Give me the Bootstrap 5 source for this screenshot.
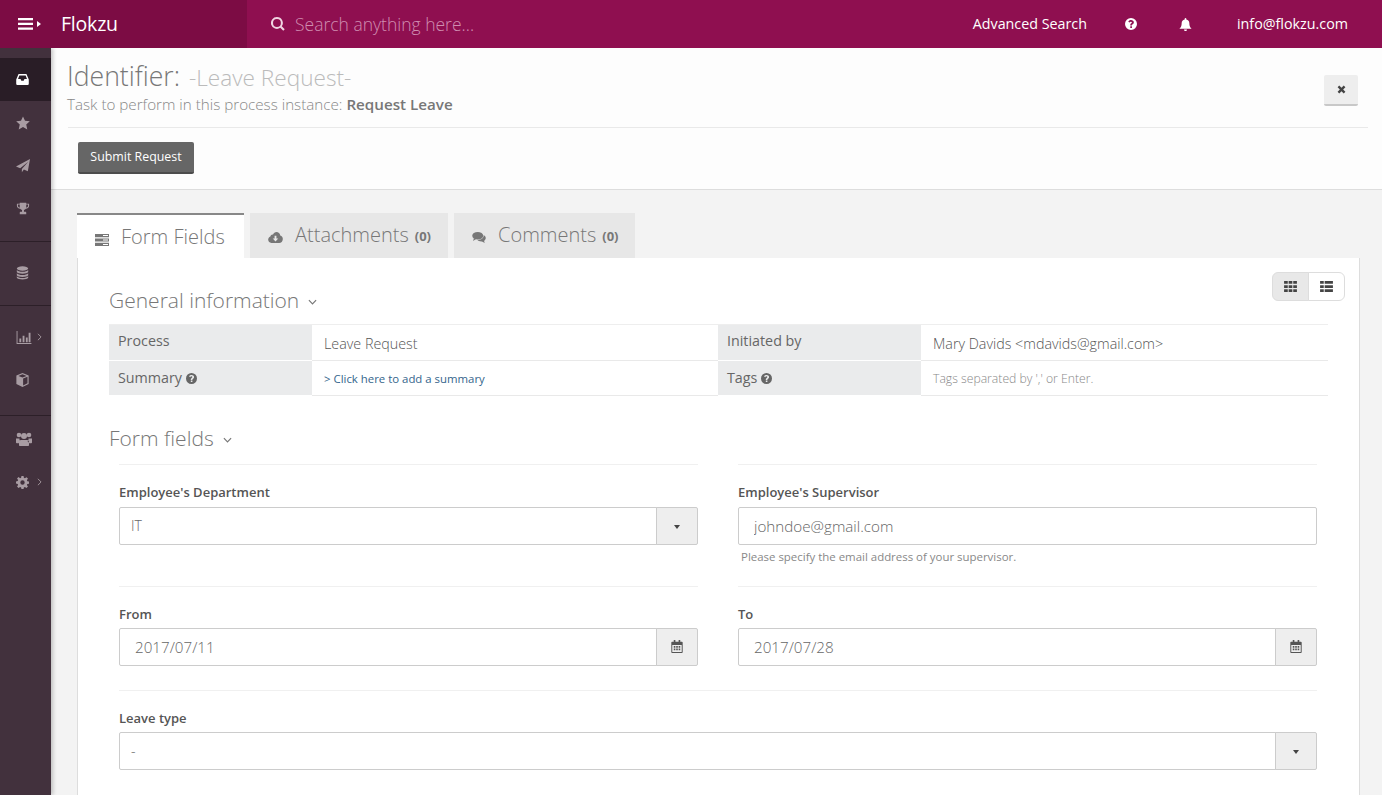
<!DOCTYPE html>
<html lang="en">
<head>
    <meta charset="UTF-8">
    <meta name="viewport" content="width=device-width, initial-scale=1.0">
    <title>Flokzu</title>
    <link href="https://cdn.jsdelivr.net/npm/bootstrap@5.3.0/dist/css/bootstrap.min.css" rel="stylesheet">
    <style>
        body { font-family: "Open Sans", "Liberation Sans", sans-serif; color: #666; background: #f3f3f3; font-size: 13px; }
        svg.ico { fill: currentColor; display: inline-block; flex: none; }

        .topbar { height: 48px; background: #8f0f50; color: #fff; }
        .brand-area { width: 247px; background: #7c0c44; padding-left: 18px; }
        .brand-name { font-size: 19.5px; font-weight: 500; margin-left: 20px; letter-spacing: -.2px; }
        .search-area { padding-left: 24px; color: #f0d5e2; }
        .search-text { font-size: 17.5px; font-weight: 300; color: #cf8db0; margin-left: 10px; }
        .top-link { font-size: 14.3px; font-weight: 400; color: #fff; text-decoration: none; }
        .top-links { padding-right: 34px; }
        .top-help { margin: 0 42px 0 38px; }
        .top-mail { margin-left: 45px; }

        .side-menu { width: 51px; background: #42313d; color: #a89ca3; box-shadow: 2px 0 4px rgba(0,0,0,.22); z-index: 2; }
        .side-group { border-bottom: 1px solid #2c1f28; padding: 10px 0; }
        .side-group.is-first { padding-bottom: 10.5px; }
        .side-group.is-third { padding-bottom: 13px; }
        .side-group.is-last { border: 0; padding: 2px 0; }
        .side-item { height: 43px; padding-left: 16px; }
        .side-item.is-active { background: #291d26; color: #fff; }
        .side-caret { margin-left: 5px; color: #a89ca3; }
        .side-caret.is-wide { margin-left: 8px; }

        .main-col { min-width: 0; }
        .page-head { background: #fdfdfd; border-bottom: 1px solid #ddd; height: 142px; padding: 12px 14px 0 16px; }
        .head-title { font-size: 26.6px; font-weight: 300; color: #777; line-height: 32px; margin: 0; }
        .head-title span { font-size: 22.6px; color: #bbb; margin-left: 2px; }
        .head-sub { font-size: 15.2px; font-weight: 300; color: #888; line-height: 20px; }
        .head-sub b { font-weight: 600; color: #777; }
        .head-rule { border-top: 1px solid #e9e9e9; margin: 13px 0 0 1px; padding: 14px 0 0 10px; }
        .btn-submit { background: #666; color: #fff; font-size: 12.4px; font-weight: 500; height: 32px; width: 116px; padding: 0; border: 0; border-bottom: 2px solid #4c4c4c; border-radius: 2px; }
        .btn-close-x { width: 34px; height: 31px; padding: 0; background: #eee; border: 0; border-bottom: 2px solid #c8c8c8; border-radius: 2px; color: #444; margin: 15px 10px 0 0; }

        .work-area { padding: 23px 22px 0 26px; }
        .flow-tabs { border: 0; gap: 6px; align-items: flex-start; }
        .flow-tabs .nav-link { height: 45px; margin: 0; border: 0; border-radius: 0; background: #e7e7e7; color: #777; font-size: 20px; font-weight: 300; display: flex; align-items: center; padding: 0 18px 2px; }
        .flow-tabs .nav-link small { font-size: 13px; font-weight: 700; margin-left: 6px; margin-top: 5px; }
        .flow-tabs .nav-link svg { margin-right: 12px; color: #777; fill: currentColor; margin-top: 6px; }
        .flow-tabs .nav-link.active { background: #fff; border-top: 2px solid #888; color: #777; padding-top: 3px; }
        .flow-tabs .nav-item:nth-child(1) .nav-link { width: 167px; }
        .flow-tabs .nav-item:nth-child(2) .nav-link { width: 198px; }
        .flow-tabs .nav-item:nth-child(3) .nav-link { width: 181px; }

        .form-sheet { background: #fff; border: 1px solid #ddd; border-top: 0; border-radius: 0 0 3px 3px; padding: 14px 31px 40px; height: 600px; }
        .sheet-top { height: 38px; }
        .view-switch { margin-right: -17px; }
        .view-switch .btn { width: 37px; height: 29px; padding: 0; border-color: #ddd; color: #444; background: #fff; display: flex; align-items: center; justify-content: center; }
        .view-switch .btn.active { background: #e8e8e8; border-color: #ddd; color: #444; }
        .sect-title { font-size: 21px; font-weight: 300; color: #777; line-height: 28px; margin: 0; }
        .sect-title.is-first { padding-top: 14px; }
        .sect-title.is-second { margin-top: 28px; }
        .sect-title svg { margin-left: 3px; }

        .info-table { table-layout: fixed; width: 1219px; margin: 14px 0 0; border-top: 1px solid #eee; }
        .info-table td { border: 0; border-bottom: 1px solid #e9e9e9; height: 35.5px; padding: 0; vertical-align: middle; background: #fff; }
        .info-table td.lbl { background: #eaebec; border-bottom-color: #fff; padding-left: 9px; font-size: 14.3px; color: #666; padding-bottom: 3px; }
        .info-table td.val { padding-left: 12px; font-size: 14.3px; font-weight: 300; color: #555; padding-top: 3px; }
        .info-table tr + tr td.lbl { padding-bottom: 1px; }
        .info-table td.val.tiny { font-size: 11.4px; font-weight: 400; color: #888; padding-top: 1px; }
        .info-table td.val.tiny.is-hint { font-size: 12.2px; font-weight: 300; padding-top: 3px; }
        .info-table a { color: #34658c; text-decoration: none; }

        .form-block { padding: 0 11px 0 10px; margin-top: 12px; }
        .field-grid { --bs-gutter-x: 40px; --bs-gutter-y: 0; }
        .field-cell { border-top: 1px solid #f0f0f0; padding-top: 18px; }
        .field-cell.row-a { height: 122px; }
        .field-cell.row-b { height: 104px; }
        .field-label { font-size: 13px; font-weight: 600; color: #555; line-height: 18px; margin: 0 0 5px; display: block; }
        .row-a .field-label { margin-bottom: 6px; }
        .flow-input { height: 37.5px; border: 1px solid #ccc; border-radius: 2px; font-size: 15.2px; font-weight: 300; color: #666; padding: 0 15px; }
        .flow-input.is-select { font-size: 14px; padding: 0 11px; }
        .flow-addon { width: 42px; justify-content: center; background: #eee; border: 1px solid #ccc; border-radius: 0 2px 2px 0; padding: 0; color: #555; }
        .help-line { font-size: 11.45px; color: #888; margin: 3px 0 0 3px; }
        .caret-down { width: 0; height: 0; border-left: 3.5px solid transparent; border-right: 3.5px solid transparent; border-top: 4px solid #444; margin-top: 3px; }
    </style>
</head>
<body class="vh-100 overflow-hidden d-flex flex-column">
    <svg width="0" height="0" class="position-absolute">
        <defs>
            <symbol id="i-inbox" viewBox="0 0 16 14"><path d="M3 0h10l3 7v5.500a1.500 1.500 0 0 1-1.500 1.500h-13A1.500 1.500 0 0 1 0 12.500V7zM4 2 2.300 6.500H5.500L6.500 8.500h3l1-2h3.200L12 2z" fill-rule="evenodd"/></symbol>
            <symbol id="i-star" viewBox="0 0 16 16"><polygon points="8,.5 10.300,5.500 15.800,6.100 11.700,9.800 12.900,15.300 8,12.500 3.100,15.300 4.300,9.800 .2,6.100 5.700,5.500"/></symbol>
            <symbol id="i-plane" viewBox="0 0 16 16"><path d="M16 0 13.500 14 9 12.100 6.700 15V11.500L14 3 4.800 10.500 0 8.500z"/></symbol>
            <symbol id="i-trophy" viewBox="0 0 16 16"><path d="M4 1h8v1h3.500v2.500c0 2-1.700 3.500-4 3.700-.6.800-1.300 1.300-2.300 1.600V12h1.600c.8 0 1.200.6 1.200 1.200V15H4v-1.800c0-.6.400-1.200 1.200-1.200h1.600V9.800c-1-.3-1.700-.8-2.300-1.600C2.200 8 .5 6.500.5 4.500V2H4zM1.800 3.200v1.300c0 1.200 1 2.200 2.300 2.400-.1-1-.1-2.400-.1-3.700zM12 3.200c0 1.300 0 2.700-.1 3.700 1.300-.2 2.300-1.200 2.300-2.400V3.200z" fill-rule="evenodd"/></symbol>
            <symbol id="i-db" viewBox="0 0 14 16"><ellipse cx="7" cy="2.800" rx="6.500" ry="2.500"/><path d="M.5 4.500C1.500 6 4 6.500 7 6.500s5.500-.5 6.500-2v2.300C13 8 10 8.800 7 8.800S1 8 .5 6.800zM.5 8.200C1.500 9.700 4 10.200 7 10.200s5.500-.5 6.500-2v2.300c-.5 1.200-3.500 2-6.500 2s-6-.8-6.500-2zM.5 11.800c1 1.500 3.500 2 6.500 2s5.500-.5 6.500-2v1.700c-.5 1.200-3.500 2-6.500 2s-6-.8-6.500-2z"/></symbol>
            <symbol id="i-chart" viewBox="0 0 16 14"><path d="M0 0h1v13h15v1H0zM3 8h2v4H3zM6.500 5h2v7h-2zM10 7h2v5h-2zM13 2h2v10h-2z"/></symbol>
            <symbol id="i-cube" viewBox="0 0 14 16"><path d="M7 0 14 2.800v9.700L7 16 0 12.500V2.800zM7 1.500 2.300 3.300 7 5.200l4.700-1.900zM7.700 6.400v7.800l5-2.500V4.400z" fill-rule="evenodd"/></symbol>
            <symbol id="i-users" viewBox="0 0 16 14"><circle cx="3" cy="3" r="2.300"/><circle cx="13" cy="3" r="2.300"/><circle cx="8" cy="4" r="3"/><path d="M0 6.500h3.500c-.2 1.500.3 2.300 1 3-1 .4-1.500 1-1.700 1.800H.8C.3 11.300 0 11 0 10.500zM16 6.500h-3.500c.2 1.500-.3 2.300-1 3 1 .4 1.500 1 1.700 1.800h2c.5 0 .8-.3.8-.8zM5 8h6c1.300 0 2 1 2 2.500V13c0 .6-.4 1-1 1H4c-.6 0-1-.4-1-1v-2.500C3 9 3.700 8 5 8z"/></symbol>
            <symbol id="i-cog" viewBox="0 0 16 16"><path d="M6.700 0h2.600l.4 2.200 1.300.5L12.900 1.400l1.800 1.800-1.300 1.900.5 1.300 2.100.4v2.600l-2.100.4-.5 1.300 1.300 1.900-1.800 1.800-1.900-1.300-1.300.5-.4 2.100H6.700l-.4-2.100-1.300-.5-1.900 1.300-1.800-1.800 1.300-1.900-.5-1.300L0 9.300V6.700l2.100-.4.5-1.300-1.300-1.900 1.800-1.800L5 2.700l1.300-.5zM8 5.300a2.700 2.700 0 1 0 0 5.400 2.700 2.700 0 0 0 0-5.400z" fill-rule="evenodd"/></symbol>
            <symbol id="i-help" viewBox="0 0 16 16"><path d="M8 0a8 8 0 1 1 0 16A8 8 0 0 1 8 0zM7 11v2.200h2.300V11zM8.100 2.800C6.200 2.800 5 3.700 4.400 4.900l1.700 1.200c.4-.7 1-1.200 1.800-1.200.7 0 1.300.4 1.300 1 0 .5-.4.800-1 1.200C7.300 7.700 7 8.300 7 9.200V10h2.300c0-.9.200-1.200 1-1.700 1-.6 1.500-1.300 1.500-2.400 0-1.900-1.800-3.100-3.700-3.100z" fill-rule="evenodd"/></symbol>
            <symbol id="i-bell" viewBox="0 0 16 16"><path d="M8 0c.6 0 1 .4 1 1v.7c2.300.5 3.700 2.200 3.700 4.500 0 4 1 5.500 2.800 7H.500c1.800-1.500 2.800-3 2.800-7C3.300 3.900 4.700 2.200 7 1.700V1c0-.6.400-1 1-1zM6.200 14h3.600c0 1.100-.8 2-1.800 2s-1.800-.9-1.800-2z"/></symbol>
            <symbol id="i-search" viewBox="0 0 16 16"><path d="M6.800 0a6.800 6.800 0 0 1 5.500 10.700l3.400 3.400-1.700 1.700-3.400-3.400A6.800 6.800 0 1 1 6.800 0zm0 2.300a4.500 4.500 0 1 0 0 9 4.500 4.500 0 0 0 0-9z" fill-rule="evenodd"/></symbol>
            <symbol id="i-times" viewBox="0 0 12 12"><path d="M3 .8 6 3.800 9 .8 11.200 3 8.200 6 11.200 9 9 11.200 6 8.200 3 11.200.8 9 3.800 6 .8 3z"/></symbol>
            <symbol id="i-cal" viewBox="0 0 14 16"><path d="M3 0h2v2h4V0h2v2h2c.6 0 1 .4 1 1v12c0 .6-.4 1-1 1H1c-.6 0-1-.4-1-1V3c0-.6.400-1 1-1h2zM1.200 6v8.800h11.600V6zM3 7.500h2v2H3zM6 7.500h2v2H6zM9 7.500h2v2H9zM3 10.500h2v2H3zM6 10.500h2v2H6zM9 10.500h2v2H9z" fill-rule="evenodd"/></symbol>
            <symbol id="i-th" viewBox="0 0 14 12"><path d="M0 0h4v3H0zM5 0h4v3H5zM10 0h4v3h-4zM0 4.500h4v3H0zM5 4.500h4v3H5zM10 4.500h4v3h-4zM0 9h4v3H0zM5 9h4v3H5zM10 9h4v3h-4z"/></symbol>
            <symbol id="i-list" viewBox="0 0 14 12"><path d="M0 0h4v3H0zM5 0h9v3H5zM0 4.500h4v3H0zM5 4.500h9v3H5zM0 9h4v3H0zM5 9h9v3H5z"/></symbol>
            <symbol id="i-server" viewBox="0 0 14 12"><path d="M0 0h14v3.200H0zM0 4.400h14v3.200H0zM0 8.800h14V12H0z"/><path fill="#fff" d="M8 1h5v1H8zM8 5.500h5v1H8zM8 9.900h5v1H8z"/></symbol>
            <symbol id="i-cloud" viewBox="0 0 16 12"><path d="M9 0c2.200 0 3.900 1.600 4.200 3.700C14.900 4.200 16 5.700 16 7.500 16 9.900 14.200 12 12 12H3.500C1.500 12 0 10.300 0 8.300 0 6.700 1 5.300 2.400 4.800 2.700 3.300 4 2.400 5.300 2.700 6 1.100 7.400 0 9 0zM7 4v3H5l3 3.300L11 7H9V4z" fill-rule="evenodd"/></symbol>
            <symbol id="i-chat" viewBox="0 0 16 13"><ellipse cx="6.500" cy="4.500" rx="6.500" ry="4.500"/><path d="M2 7.500 1 10.500 5 8zM13.500 3.500C15 4.400 16 5.700 16 7.200c0 1.400-.8 2.600-2 3.300l.8 2.500-3.300-1.800c-2.500.2-4.500-.6-5.500-1.900 4 .3 8-2 7.500-5.800z"/></symbol>
            <symbol id="i-chev" viewBox="0 0 10 6"><path d="M1 1 5 5 9 1" fill="none" stroke="currentColor" stroke-width="1.300"/></symbol>
            <symbol id="i-right" viewBox="0 0 6 10"><path d="M1 1 5 5 1 9" fill="none" stroke="currentColor" stroke-width="1.100"/></symbol>
        </defs>
    </svg>

    <nav class="topbar d-flex align-items-stretch flex-shrink-0">
        <div class="brand-area d-flex align-items-center">
            <svg class="ico" width="23" height="12" viewBox="0 0 23 12"><path d="M0 0h15v2.200H0zM0 4.800h15V7H0zM0 9.600h15v2.200H0zM19 3l4 3-4 3z"/></svg>
            <span class="brand-name">Flokzu</span>
        </div>
        <div class="search-area d-flex align-items-center flex-grow-1">
            <svg class="ico" width="14" height="14"><use href="#i-search"/></svg>
            <span class="search-text">Search anything here...</span>
        </div>
        <div class="top-links d-flex align-items-center">
            <a class="top-link" href="#">Advanced Search</a>
            <svg class="ico top-help" width="12" height="12"><use href="#i-help"/></svg>
            <svg class="ico" width="13" height="13"><use href="#i-bell"/></svg>
            <a class="top-link top-mail" href="#">info@flokzu.com</a>
        </div>
    </nav>

    <div class="d-flex flex-grow-1 overflow-hidden">
        <aside class="side-menu flex-shrink-0">
            <div class="side-group is-first">
                <div class="side-item is-active d-flex align-items-center"><svg class="ico" width="13" height="11"><use href="#i-inbox"/></svg></div>
                <div class="side-item d-flex align-items-center"><svg class="ico" width="14" height="14"><use href="#i-star"/></svg></div>
                <div class="side-item d-flex align-items-center"><svg class="ico" width="14" height="14"><use href="#i-plane"/></svg></div>
                <div class="side-item d-flex align-items-center"><svg class="ico" width="14" height="13"><use href="#i-trophy"/></svg></div>
            </div>
            <div class="side-group">
                <div class="side-item d-flex align-items-center"><svg class="ico" width="13" height="14"><use href="#i-db"/></svg></div>
            </div>
            <div class="side-group is-third">
                <div class="side-item d-flex align-items-center"><svg class="ico" width="16" height="13"><use href="#i-chart"/></svg><svg class="ico side-caret" width="5" height="8"><use href="#i-right"/></svg></div>
                <div class="side-item d-flex align-items-center"><svg class="ico" width="13" height="14"><use href="#i-cube"/></svg></div>
            </div>
            <div class="side-group is-last">
                <div class="side-item d-flex align-items-center"><svg class="ico" width="16" height="14"><use href="#i-users"/></svg></div>
                <div class="side-item d-flex align-items-center"><svg class="ico" width="13" height="13"><use href="#i-cog"/></svg><svg class="ico side-caret is-wide" width="5" height="8"><use href="#i-right"/></svg></div>
            </div>
        </aside>

        <main class="main-col flex-grow-1">
            <header class="page-head">
                <div class="d-flex justify-content-between align-items-start">
                    <div>
                        <h1 class="head-title">Identifier: <span>-Leave Request-</span></h1>
                        <div class="head-sub">Task to perform in this process instance: <b>Request Leave</b></div>
                    </div>
                    <button class="btn btn-close-x d-flex align-items-center justify-content-center" type="button"><svg class="ico" width="9" height="9"><use href="#i-times"/></svg></button>
                </div>
                <div class="head-rule">
                    <button class="btn btn-submit" type="button">Submit Request</button>
                </div>
            </header>

            <section class="work-area">
                <ul class="nav nav-tabs flow-tabs">
                    <li class="nav-item"><a class="nav-link active" href="#"><svg width="14" height="12"><use href="#i-server"/></svg>Form Fields</a></li>
                    <li class="nav-item"><a class="nav-link" href="#"><svg class="ico" width="15" height="11"><use href="#i-cloud"/></svg>Attachments <small>(0)</small></a></li>
                    <li class="nav-item"><a class="nav-link" href="#"><svg class="ico" width="14" height="11"><use href="#i-chat"/></svg>Comments <small>(0)</small></a></li>
                </ul>

                <div class="form-sheet">
                    <div class="sheet-top d-flex justify-content-between align-items-start">
                        <h2 class="sect-title is-first">General information <svg class="ico" width="9" height="6"><use href="#i-chev"/></svg></h2>
                        <div class="btn-group view-switch">
                            <button class="btn active" type="button"><svg class="ico" width="13" height="11"><use href="#i-th"/></svg></button>
                            <button class="btn" type="button"><svg class="ico" width="13" height="11"><use href="#i-list"/></svg></button>
                        </div>
                    </div>

                    <table class="table info-table">
                        <colgroup><col style="width:203px"><col style="width:406px"><col style="width:203px"><col style="width:407px"></colgroup>
                        <tr>
                            <td class="lbl">Process</td>
                            <td class="val">Leave Request</td>
                            <td class="lbl">Initiated by</td>
                            <td class="val">Mary Davids &lt;mdavids@gmail.com&gt;</td>
                        </tr>
                        <tr>
                            <td class="lbl">Summary <svg class="ico" width="11" height="11"><use href="#i-help"/></svg></td>
                            <td class="val tiny"><a href="#">&gt; Click here to add a summary</a></td>
                            <td class="lbl">Tags <svg class="ico" width="11" height="11"><use href="#i-help"/></svg></td>
                            <td class="val tiny is-hint">Tags separated by ',' or Enter.</td>
                        </tr>
                    </table>

                    <h2 class="sect-title is-second">Form fields <svg class="ico ms-1" width="9" height="6"><use href="#i-chev"/></svg></h2>

                    <div class="form-block">
                        <div class="row field-grid">
                            <div class="col-6">
                                <div class="field-cell row-a">
                                    <label class="field-label">Employee's Department</label>
                                    <div class="input-group">
                                        <input class="form-control flow-input is-select" value="IT">
                                        <span class="input-group-text flow-addon"><span class="caret-down"></span></span>
                                    </div>
                                </div>
                            </div>
                            <div class="col-6">
                                <div class="field-cell row-a">
                                    <label class="field-label">Employee's Supervisor</label>
                                    <input class="form-control flow-input" value="johndoe@gmail.com">
                                    <p class="help-line">Please specify the email address of your supervisor.</p>
                                </div>
                            </div>
                            <div class="col-6">
                                <div class="field-cell row-b">
                                    <label class="field-label">From</label>
                                    <div class="input-group">
                                        <input class="form-control flow-input" value="2017/07/11">
                                        <span class="input-group-text flow-addon"><svg class="ico" width="12" height="13"><use href="#i-cal"/></svg></span>
                                    </div>
                                </div>
                            </div>
                            <div class="col-6">
                                <div class="field-cell row-b">
                                    <label class="field-label">To</label>
                                    <div class="input-group">
                                        <input class="form-control flow-input" value="2017/07/28">
                                        <span class="input-group-text flow-addon"><svg class="ico" width="12" height="13"><use href="#i-cal"/></svg></span>
                                    </div>
                                </div>
                            </div>
                            <div class="col-12">
                                <div class="field-cell">
                                    <label class="field-label">Leave type</label>
                                    <div class="input-group">
                                        <input class="form-control flow-input is-select" value="-">
                                        <span class="input-group-text flow-addon"><span class="caret-down"></span></span>
                                    </div>
                                </div>
                            </div>
                        </div>
                    </div>
                </div>
            </section>
        </main>
    </div>
</body>
</html>
